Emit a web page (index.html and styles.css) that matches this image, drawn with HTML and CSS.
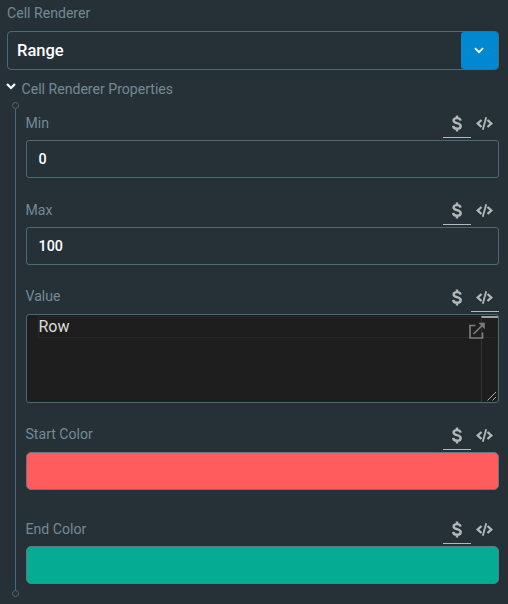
FILE: index.html
```html
<!DOCTYPE html>
<html lang="en">
<head>
<meta charset="utf-8">
<title>Cell Renderer</title>
<link rel="stylesheet" href="styles.css">
</head>
<body>
<svg class="defs" aria-hidden="true">
  <symbol id="dollar" viewBox="0 0 10 17">
    <path d="M8.5 5.6C8.3 3.9 7.1 3.1 5.1 3.1 3.1 3.1 1.6 3.9 1.6 5.4 1.6 8.9 8.7 7.3 8.7 11.1 8.7 12.9 7.2 13.8 5.1 13.8 2.8 13.8 1.3 12.9 1.2 10.9M5 .4V3M5 14v2.4" fill="none" stroke="currentColor" stroke-width="2.4"/>
  </symbol>
  <symbol id="code" viewBox="0 0 17 13">
    <path d="M5.5 3 1.7 6.5 5.5 10M11.5 3l3.8 3.5-3.8 3.5" fill="none" stroke="currentColor" stroke-width="2.3"/>
    <path d="M10.2.3 6.8 12.7" fill="none" stroke="currentColor" stroke-width="1.8"/>
  </symbol>
</svg>
<main class="panel">
  <div class="label title">Cell Renderer</div>
  <div class="select">
    <span class="select-value">Range</span>
    <button class="select-button" aria-label="Open"><svg width="10" height="7" viewBox="0 0 10 7"><path d="M1 1.2 5 5.2 9 1.2" fill="none" stroke="#fff" stroke-width="1.8"/></svg></button>
  </div>
  <div class="section">
    <svg width="10" height="7" viewBox="0 0 10 7"><path d="M1 1 5 5 9 1" fill="none" stroke="#fff" stroke-width="2.2"/></svg>
    <span class="label">Cell Renderer Properties</span>
  </div>
  <div class="group">
    <div class="rail"><i class="dot"></i><i class="line"></i><i class="dot"></i></div>
    <div class="fields">
      <section class="field">
        <header class="head"><span class="label">Min</span><span class="tab active"><svg width="10" height="17"><use href="#dollar"/></svg></span><span class="tab"><svg width="17" height="13"><use href="#code"/></svg></span></header>
        <div class="input">0</div>
      </section>
      <section class="field">
        <header class="head"><span class="label">Max</span><span class="tab active"><svg width="10" height="17"><use href="#dollar"/></svg></span><span class="tab"><svg width="17" height="13"><use href="#code"/></svg></span></header>
        <div class="input">100</div>
      </section>
      <section class="field">
        <header class="head"><span class="label raised">Value</span><span class="tab"><svg width="10" height="17"><use href="#dollar"/></svg></span><span class="tab active"><svg width="17" height="13"><use href="#code"/></svg></span></header>
        <div class="editor">
          <div class="code-line">Row</div>
          <div class="ruler"></div>
          <svg class="popout" width="18" height="18" viewBox="0 0 18 18"><path d="M7.5 3.5H2V16H14.5V10.5M5.5 12 15 2.5" fill="none" stroke="#7b7b7b" stroke-width="1.7"/><path d="M10.3.8h6.5v6.5z" fill="#7b7b7b"/></svg>
          <svg class="grip" width="10" height="10" viewBox="0 0 10 10"><path d="M.5 9.5 9 1M5.5 9.5 9 6" fill="none" stroke="#aaa" stroke-width="1"/></svg>
        </div>
      </section>
      <section class="field">
        <header class="head"><span class="label raised">Start Color</span><span class="tab active"><svg width="10" height="17"><use href="#dollar"/></svg></span><span class="tab"><svg width="17" height="13"><use href="#code"/></svg></span></header>
        <div class="swatch start"></div>
      </section>
      <section class="field end-field">
        <header class="head"><span class="label">End Color</span><span class="tab active"><svg width="10" height="17"><use href="#dollar"/></svg></span><span class="tab"><svg width="17" height="13"><use href="#code"/></svg></span></header>
        <div class="swatch end"></div>
      </section>
    </div>
  </div>
</main>
</body>
</html>
```
FILE: styles.css
```css
* { box-sizing: border-box; }
body {
  margin: 0;
  height: 604px;
  overflow: hidden;
  background: #263137;
  font-family: Roboto, sans-serif;
  font-size: 14px;
}
svg { display: block; }
.defs { position: absolute; width: 0; height: 0; }
.panel { padding: 0 9.5px 0 7px; }
.label { color: #738a94; font-size: 14.1px; line-height: 18px; }
.title { height: 31px; padding-top: 4px; }
.select {
  display: flex;
  height: 39px;
  border: 1px solid #4d6973;
  border-radius: 4px;
}
.select-value {
  flex: 1;
  padding-left: 9px;
  color: #fff;
  font-size: 16.5px;
  font-weight: 500;
  line-height: 37px;
}
.select-button {
  display: flex;
  align-items: center;
  justify-content: center;
  width: 37px;
  padding: 0;
  border: 0;
  border-radius: 3px;
  background: #0288d1;
}
.section { display: flex; gap: 5.5px; height: 32px; padding-top: 10px; }
.section svg { margin-top: 3px; margin-left: -1px; }
.group { display: flex; height: 495px; }
.rail { display: flex; flex-direction: column; align-items: center; width: 7px; margin-left: 5px; }
.dot { width: 7px; height: 7px; border: 1px solid #4d6973; border-radius: 50%; }
.line { flex: 1; width: 1px; background: #4d6973; }
.fields { flex: 1; margin-left: 6.5px; padding-top: 7px; }
.field { margin-bottom: 18px; }
.end-field { margin-top: 25px; }
.head { display: flex; height: 31px; padding-bottom: 2px; }
.head .label { flex: 1; padding-top: 5px; }
.head .raised { padding-top: 4px; }
.tab {
  display: flex;
  align-items: center;
  justify-content: center;
  width: 28px;
  border-bottom: 1px solid transparent;
  color: #b3b8ba;
}
.tab.active { border-color: #b3b8ba; }
.input {
  height: 38px;
  padding-left: 12px;
  border: 1px solid #4d6973;
  border-radius: 3px;
  color: #fff;
  font-size: 14.3px;
  font-weight: 500;
  line-height: 36px;
}
.editor {
  position: relative;
  height: 89px;
  border: 1px solid #4d6973;
  border-radius: 3px;
  background: #1e1e1e;
  overflow: hidden;
}
.code-line {
  height: 22px;
  margin: 1px 1px 0 11px;
  border: 1px solid #282828;
  border-width: 1px 0 1px 1px;
  color: #dcdcdc;
  font-size: 16px;
  line-height: 20px;
}
.ruler {
  position: absolute;
  top: 1px;
  right: 0;
  bottom: 0;
  width: 17px;
  border-left: 1px solid #343434;
  border-top: 2px solid #a0a0a0;
}
.popout { position: absolute; top: 7px; right: 12px; }
.grip { position: absolute; right: 1px; bottom: 1px; }
.swatch { height: 38px; border: 1px solid #667783; border-radius: 5px; }
.start { background: #ff5d5d; }
.end { background: #05ab93; }
```
